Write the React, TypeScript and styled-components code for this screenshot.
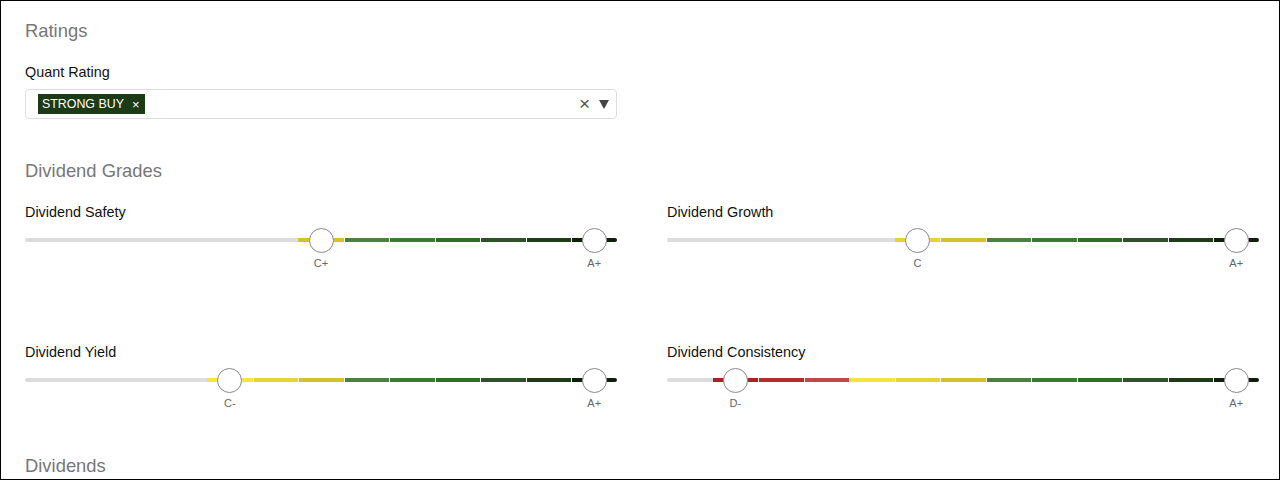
import React from 'react';
import styled, { createGlobalStyle } from 'styled-components';

const GRADES = ['F', 'D-', 'D', 'D+', 'C-', 'C', 'C+', 'B-', 'B', 'B+', 'A-', 'A', 'A+'];

const GRADE_COLORS = [
    '#8c1515',
    '#b01f1f',
    '#b62c2c',
    '#c24848',
    '#f6e53e',
    '#e6d335',
    '#d5c22b',
    '#4b8040',
    '#3c7a31',
    '#2f6d24',
    '#2f5029',
    '#1f3b1a',
    '#0f1f0c',
];

type Slider = {
    label: string;
    min: number;
    max: number;
};

const sliders: Slider[] = [
    { label: 'Dividend Safety', min: 6, max: 12 },
    { label: 'Dividend Growth', min: 5, max: 12 },
    { label: 'Dividend Yield', min: 4, max: 12 },
    { label: 'Dividend Consistency', min: 1, max: 12 },
];

const GlobalStyle = createGlobalStyle`
    html, body {
        margin: 0;
        padding: 0;
        background: #fff;
    }
    body {
        font-family: "Liberation Sans", Arial, sans-serif;
    }
`;

const GradeSlider = ({ label, min, max }: Slider) => {
    const step = 100 / GRADES.length;

    return (
        <SliderItem>
            <FieldLabel>{label}</FieldLabel>
            <SliderArea>
                <Track>
                    {GRADES.map((g, i) => {
                        const active = i >= min && i <= max;
                        return (
                            <Segment
                                key={g}
                                $color={active ? GRADE_COLORS[i] : '#dcdcdc'}
                                $gap={active && i > min}
                                $first={i === 0}
                                $last={i === GRADES.length - 1}
                            />
                        );
                    })}
                </Track>
                {[min, max].map((i) => (
                    <Handle key={i} style={{ left: `${step * (i + 0.5)}%` }} />
                ))}
            </SliderArea>
            <GradeRow>
                {[min, max].map((i) => (
                    <GradeLabel key={i} style={{ left: `${step * (i + 0.5)}%` }}>
                        {GRADES[i]}
                    </GradeLabel>
                ))}
            </GradeRow>
        </SliderItem>
    );
};

export default function App() {
    return (
        <>
            <GlobalStyle />
            <Page>
                <SectionTitle>Ratings</SectionTitle>
                <FieldLabel $spaced>Quant Rating</FieldLabel>
                <Select>
                    <Chip>
                        STRONG BUY<ChipClose>×</ChipClose>
                    </Chip>
                    <SelectActions>
                        <ClearIcon>×</ClearIcon>
                        <Caret />
                    </SelectActions>
                </Select>

                <SectionTitle $gapTop={40}>Dividend Grades</SectionTitle>
                <SliderGrid>
                    {sliders.map((s) => (
                        <GradeSlider key={s.label} {...s} />
                    ))}
                </SliderGrid>

                <SectionTitle $gapTop={44}>Dividends</SectionTitle>
            </Page>
        </>
    );
}

const Page = styled.div`
    box-sizing: border-box;
    width: 1280px;
    height: 480px;
    overflow: hidden;
    border: 1px solid #000;
    padding: 18px 20px 0 24px;
`;

const SectionTitle = styled.h2<{ $gapTop?: number }>`
    margin: ${(p) => p.$gapTop ?? 0}px 0 0;
    font-size: 18.4px;
    line-height: 24px;
    font-weight: normal;
    color: #777;
`;

const FieldLabel = styled.div<{ $spaced?: boolean }>`
    margin-top: ${(p) => (p.$spaced ? 19 : 0)}px;
    font-size: 14.4px;
    line-height: 20px;
    color: #111;
`;

const Select = styled.div`
    box-sizing: border-box;
    width: 592px;
    height: 30px;
    margin-top: 7px;
    border: 1px solid #dedede;
    border-radius: 4px;
    display: flex;
    align-items: center;
    padding: 0 7px 0 12px;
`;

const Chip = styled.span`
    display: inline-flex;
    align-items: center;
    height: 20px;
    padding: 0 5px 0 4px;
    background: #1d3a17;
    color: #fff;
    font-size: 12.4px;
`;

const ChipClose = styled.span`
    margin-left: 8px;
    font-size: 13px;
`;

const SelectActions = styled.div`
    margin-left: auto;
    display: flex;
    align-items: center;
    gap: 9px;
`;

const ClearIcon = styled.span`
    font-size: 19px;
    line-height: 18px;
    color: #555;
`;

const Caret = styled.span`
    width: 0;
    height: 0;
    border-left: 5px solid transparent;
    border-right: 5px solid transparent;
    border-top: 9px solid #444;
`;

const SliderGrid = styled.div`
    margin-top: 19px;
    display: grid;
    grid-template-columns: 592px 592px;
    column-gap: 50px;
    row-gap: 72px;
`;

const SliderItem = styled.div`
    display: flex;
    flex-direction: column;
`;

const SliderArea = styled.div`
    position: relative;
    height: 24px;
    margin-top: 6px;
    display: flex;
    align-items: center;
`;

const Track = styled.div`
    display: flex;
    width: 100%;
    height: 4px;
`;

const Segment = styled.div<{ $color: string; $gap: boolean; $first: boolean; $last: boolean }>`
    flex: 1;
    background: ${(p) => p.$color};
    box-shadow: ${(p) => (p.$gap ? 'inset 1px 0 0 #f4f4f4' : 'none')};
    border-radius: ${(p) => (p.$first ? '2px 0 0 2px' : p.$last ? '0 2px 2px 0' : '0')};
`;

const Handle = styled.div`
    position: absolute;
    top: 0;
    box-sizing: border-box;
    width: 25px;
    height: 25px;
    margin-left: -12.5px;
    border: 1px solid #8a8a8a;
    border-radius: 50%;
    background: #fff;
`;

const GradeRow = styled.div`
    position: relative;
    height: 14px;
    margin-top: 4px;
`;

const GradeLabel = styled.span`
    position: absolute;
    top: 0;
    transform: translateX(-50%);
    font-size: 11px;
    line-height: 14px;
    color: #666;
`;
